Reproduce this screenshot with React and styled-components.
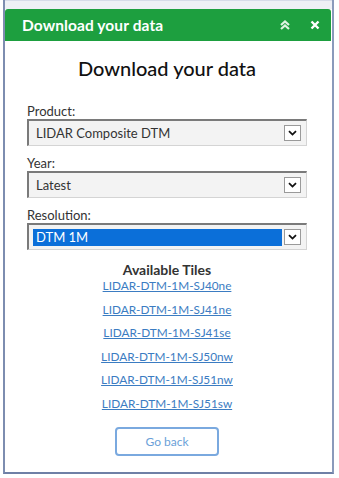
import React from 'react';
import styled, { createGlobalStyle } from 'styled-components';

const Global = createGlobalStyle`
  html, body {
    margin: 0;
    padding: 0;
    background: #ffffff;
  }
  body {
    font-family: Lato, "Noto Sans", "Liberation Sans", sans-serif;
  }
`

const Frame = styled.div`
  box-sizing: border-box;
  margin-left: 3px;
  width: 331px;
  height: 474px;
  border-left: 2px solid #7d8db0;
  border-right: 2px solid #8a9abb;
  border-bottom: 2px solid #6f80a6;
  display: flex;
  flex-direction: column;
  overflow: hidden;
  & > * {
    flex-shrink: 0;
  }
`

const MapStrip = styled.div`
  height: 9px;
  background: linear-gradient(#d6dbe8 0, #d6dbe8 1px, #eef0f5 1px);
`

const Header = styled.div`
  height: 32px;
  margin-right: 1px;
  background: #1d9f3f;
  border-radius: 3px 3px 0 0;
  display: flex;
  align-items: center;
  padding: 0 10px 0 17px;
  color: #ffffff;
`

const HeaderTitle = styled.div`
  flex: 1;
  font-size: 15.5px;
  font-weight: 700;
  letter-spacing: 0.1px;
`

const HeaderIcon = styled.svg`
  width: 12px;
  height: 12px;
  margin-left: ${p => p.gap || 0}px;
`

const Body = styled.div`
  display: flex;
  flex-direction: column;
  padding: 0 25px 0 22px;
`

const Heading = styled.h1`
  margin: 15px 0 22px;
  line-height: 25px;
  text-align: center;
  font-size: 20px;
  font-weight: 500;
  color: #111111;
`

const Label = styled.div`
  font-size: 13px;
  color: #333333;
  line-height: 16px;
`

const SelectBox = styled.div`
  box-sizing: border-box;
  height: 27px;
  border-top: 2px solid #7a7a7a;
  border-left: 2px solid #7a7a7a;
  border-right: 1px solid #d4d4d4;
  border-bottom: 1px solid #d4d4d4;
  background: #f3f3f3;
  display: flex;
  align-items: center;
  padding: 0 5px 0 4px;
  margin-bottom: 9px;
`

const SelectText = styled.div`
  flex: 1;
  height: 17px;
  line-height: 17px;
  font-size: 13px;
  padding-left: 3px;
  margin-right: 2px;
  color: ${p => (p.selected ? '#ffffff' : '#333333')};
  background: ${p => (p.selected ? '#0b6fd9' : 'transparent')};
`

const ArrowButton = styled.div`
  box-sizing: border-box;
  width: 17px;
  height: 16px;
  border: 1px solid #9a9a9a;
  background: #ffffff;
  display: flex;
  align-items: center;
  justify-content: center;
`

const TilesTitle = styled.div`
  margin-top: 3px;
  text-align: center;
  font-size: 14px;
  font-weight: 700;
  color: #333333;
  line-height: 16px;
`

const TileList = styled.div`
  display: flex;
  flex-direction: column;
  align-items: center;
  gap: 7px;
`

const TileLink = styled.a`
  font-size: 11.8px;
  line-height: 16.5px;
  color: #3b7cc2;
  text-decoration: underline;
  cursor: pointer;
`

const BackButton = styled.button`
  align-self: center;
  margin-top: 15px;
  width: 104px;
  height: 29px;
  border: 2px solid #7aa9df;
  border-radius: 4px;
  background: #ffffff;
  color: #6b9fd8;
  font-family: inherit;
  font-size: 12px;
`

const Chevron = () => (
  <svg width="9" height="6" viewBox="0 0 9 6">
    <path d="M1 1.2 L4.5 4.6 L8 1.2" fill="none" stroke="#111" strokeWidth="1.8" />
  </svg>
)

const Select = ({ value, selected }) => (
  <SelectBox>
    <SelectText selected={selected}>{value}</SelectText>
    <ArrowButton><Chevron /></ArrowButton>
  </SelectBox>
)

const tiles = [
  'LIDAR-DTM-1M-SJ40ne',
  'LIDAR-DTM-1M-SJ41ne',
  'LIDAR-DTM-1M-SJ41se',
  'LIDAR-DTM-1M-SJ50nw',
  'LIDAR-DTM-1M-SJ51nw',
  'LIDAR-DTM-1M-SJ51sw',
]

export default function App() {
  return (
    <>
      <Global />
      <Frame>
        <MapStrip />
        <Header>
          <HeaderTitle>Download your data</HeaderTitle>
          <HeaderIcon viewBox="0 0 12 12">
            <path d="M2 6 L6 2.5 L10 6 M2 10 L6 6.5 L10 10" fill="none" stroke="#dff3e2" strokeWidth="2.2" />
          </HeaderIcon>
          <HeaderIcon viewBox="0 0 12 12" gap={18}>
            <path d="M2.5 2.5 L9.5 9.5 M9.5 2.5 L2.5 9.5" fill="none" stroke="#ffffff" strokeWidth="2.4" />
          </HeaderIcon>
        </Header>
        <Body>
          <Heading>Download your data</Heading>
          <Label>Product:</Label>
          <Select value="LIDAR Composite DTM" />
          <Label>Year:</Label>
          <Select value="Latest" />
          <Label>Resolution:</Label>
          <Select value="DTM 1M" selected />
          <TilesTitle>Available Tiles</TilesTitle>
          <TileList>
            {tiles.map(t => (
              <TileLink key={t}>{t}</TileLink>
            ))}
          </TileList>
          <BackButton>Go back</BackButton>
        </Body>
      </Frame>
    </>
  );
}
